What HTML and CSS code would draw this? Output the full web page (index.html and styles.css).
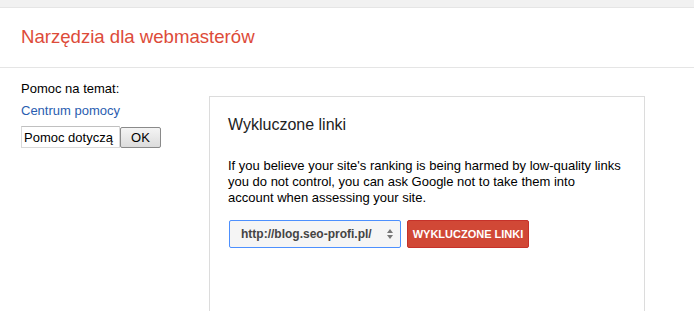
FILE: index.html
```html
<!DOCTYPE html>
<html lang="pl">
<head>
<meta charset="utf-8">
<title>Narzędzia dla webmasterów</title>
<link rel="stylesheet" href="styles.css">
</head>
<body>
<div class="topbar"></div>
<header class="header">
  <h1 class="brand">Narzędzia dla webmasterów</h1>
</header>
<main class="main">
  <aside class="side">
    <div class="side-label">Pomoc na temat:</div>
    <a class="side-link" href="#">Centrum pomocy</a>
    <form class="search">
      <input class="search-input" type="text" value="Pomoc dotyczą">
      <button class="search-btn" type="button">OK</button>
    </form>
  </aside>
  <section class="panel">
    <h2 class="panel-title">Wykluczone linki</h2>
    <p class="panel-text">If you believe your site's ranking is being harmed by low-quality links you do not control, you can ask Google not to take them into account when assessing your site.</p>
    <div class="actions">
      <div class="select">
        <span class="select-value">http://blog.seo-profi.pl/</span>
        <svg class="select-arrows" width="8" height="12" viewBox="0 0 8 12"><path d="M4 1 L7 5 L1 5 Z" fill="#777"/><path d="M4 11 L7 7 L1 7 Z" fill="#777"/></svg>
      </div>
      <button class="red-btn" type="button">WYKLUCZONE LINKI</button>
    </div>
  </section>
</main>
</body>
</html>
```
FILE: styles.css
```css
html, body {
  margin: 0;
  padding: 0;
  background: #fff;
  font-family: Arial, "Liberation Sans", sans-serif;
  color: #222;
}
.topbar {
  height: 7px;
  background: #f1f1f1;
  border-bottom: 1px solid #e5e5e5;
}
.header {
  height: 59px;
  border-bottom: 1px solid #e5e5e5;
  display: flex;
  align-items: center;
  padding-left: 21px;
}
.brand {
  margin: 0;
  font-weight: normal;
  font-size: 18.6px;
  color: #dd4b39;
  padding-bottom: 2px;
}
.main {
  display: flex;
  padding-left: 21px;
}
.side {
  width: 188px;
  padding-top: 13px;
  font-size: 13px;
}
.side-label {
  line-height: 16px;
  color: #000;
}
.side-link {
  display: block;
  margin-top: 6px;
  line-height: 16px;
  color: #2a5db0;
  text-decoration: none;
}
.search {
  display: flex;
  margin-top: 7px;
  align-items: flex-start;
}
.search-input {
  width: 93px;
  height: 20px;
  margin: 0;
  padding: 0 2px;
  border: 1px solid #d9d9d9;
  border-top-color: #c0c0c0;
  font-family: Arial, "Liberation Sans", sans-serif;
  font-size: 13px;
  color: #000;
  box-sizing: content-box;
}
.search-btn {
  width: 41px;
  height: 21px;
  margin: 1px 0 0 0;
  padding: 0;
  border: 1px solid #8a8a8a;
  border-radius: 2px;
  background: linear-gradient(#f4f4f4, #dcdcdc);
  font-family: Arial, "Liberation Sans", sans-serif;
  font-size: 13px;
  color: #000;
}
.panel {
  margin-top: 28px;
  width: 436px;
  height: 216px;
  border: 1px solid #dcdcdc;
  border-bottom: none;
  padding: 0 0 0 18px;
  box-sizing: border-box;
}
.panel-title {
  margin: 18px 0 0 0;
  font-weight: normal;
  font-size: 16px;
  line-height: 20px;
  color: #222;
}
.panel-text {
  margin: 23px 0 0 0;
  font-size: 13px;
  line-height: 16px;
  color: #000;
  width: 395px;
}
.actions {
  display: flex;
  gap: 6px;
  margin-top: 14px;
  padding-left: 1px;
}
.select {
  width: 172px;
  height: 28px;
  box-sizing: border-box;
  border: 1px solid #4d90fe;
  border-radius: 2px;
  background: #f5f5f5;
  display: flex;
  align-items: center;
  justify-content: space-between;
  padding: 0 6px 0 11px;
}
.select-value {
  font-size: 12px;
  font-weight: bold;
  color: #444;
}
.red-btn {
  width: 122px;
  height: 28px;
  margin: 0;
  padding: 0;
  border: 1px solid #c6322a;
  border-radius: 2px;
  background: #d14836;
  color: #fff;
  font-family: Arial, "Liberation Sans", sans-serif;
  font-size: 11px;
  font-weight: bold;
}
```
